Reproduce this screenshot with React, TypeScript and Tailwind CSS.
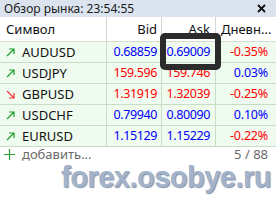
const rows = [
  { sym: 'AUDUSD', up: true, bid: '0.68859', ask: '0.69009', pc: '-0.35%', bc: 'text-[#0000ff]', pcc: 'text-[#ff0000]' },
  { sym: 'USDJPY', up: true, bid: '159.596', ask: '159.746', pc: '0.03%', bc: 'text-[#ff0000]', pcc: 'text-[#0000ff]' },
  { sym: 'GBPUSD', up: false, bid: '1.31919', ask: '1.32039', pc: '-0.25%', bc: 'text-[#ff0000]', pcc: 'text-[#ff0000]' },
  { sym: 'USDCHF', up: true, bid: '0.79940', ask: '0.80090', pc: '0.10%', bc: 'text-[#0000ff]', pcc: 'text-[#0000ff]' },
  { sym: 'EURUSD', up: true, bid: '1.15129', ask: '1.15229', pc: '-0.22%', bc: 'text-[#0000ff]', pcc: 'text-[#ff0000]' },
];

function Arrow({ up }: { up: boolean }) {
  return up ? (
    <svg width="9" height="9" viewBox="0 0 9 9" fill="none" stroke="#1c9e2a" strokeWidth="1.2">
      <path d="M1 8 L8 1 M3 1 H8 V6" />
    </svg>
  ) : (
    <svg width="9" height="9" viewBox="0 0 9 9" fill="none" stroke="#e8343a" strokeWidth="1.2">
      <path d="M1 1 L8 8 M8 3 V8 H3" />
    </svg>
  );
}

export default function App() {
  return (
    <div className="relative w-[276px] h-[203px] bg-white overflow-hidden text-[13px] leading-none" style={{ fontFamily: '"Noto Sans", "Open Sans", sans-serif' }}>
      <div className="h-[17px] bg-[#dbe4ee] flex items-center justify-between pl-[4px] pr-[10px]">
        <span className="text-[12px] text-[#1a1a1a]">Обзор рынка: 23:54:55</span>
        <svg width="9" height="9" viewBox="0 0 9 9" stroke="#111" strokeWidth="1.8">
          <path d="M1 1 L8 8 M8 1 L1 8" />
        </svg>
      </div>

      <div className="grid grid-cols-[107px_55px_54px_60px] h-[25px] border-b border-[#d4dcd4] text-[#111]">
        <div className="border-r border-[#d6d6d6] flex items-center pl-[6px]">Символ</div>
        <div className="border-r border-[#d6d6d6] flex items-center justify-end pr-[4px]">Bid</div>
        <div className="border-r border-[#d6d6d6] flex items-center justify-end pr-[5px]">Ask</div>
        <div className="flex items-center pl-[5px]">Дневн...</div>
      </div>

      {rows.map((r) => (
        <div key={r.sym} className="grid grid-cols-[107px_55px_54px_60px] h-[21px] border-b border-[#c8dcc8] bg-[#f0fbf0]">
          <div className="border-r border-[#c8dcc8] flex items-center pl-[6px] gap-[7px] text-[#111]">
            <Arrow up={r.up} />
            <span>{r.sym}</span>
          </div>
          <div className={`border-r border-[#c8dcc8] flex items-center justify-end pr-[4px] text-[12.5px] tracking-[-0.4px] ${r.bc}`}>{r.bid}</div>
          <div className={`border-r border-[#c8dcc8] flex items-center justify-end pr-[5px] text-[12.5px] tracking-[-0.4px] ${r.bc}`}>{r.ask}</div>
          <div className={`flex items-center justify-end pr-[8px] text-[12.5px] tracking-[-0.2px] ${r.pcc}`}>{r.pc}</div>
        </div>
      ))}

      <div className="h-[14px] flex items-center justify-between pl-[4px] pr-[8px] text-[#6a6a6a]">
        <div className="flex items-center gap-[7px]">
          <svg width="11" height="11" viewBox="0 0 11 11" stroke="#2a9a3a" strokeWidth="1.2">
            <path d="M5.5 0 V11 M0 5.5 H11" />
          </svg>
          <span>добавить...</span>
        </div>
        <span>5 / 88</span>
      </div>

      <div
        className="absolute left-[61px] top-[163px] text-[29px] font-bold tracking-[-0.5px] text-[#a3b4ca] [text-shadow:1px_1px_1px_#7d92ae]"
        style={{ fontFamily: '"Liberation Sans", Arial, sans-serif' }}
      >
        forex.osobye.ru
      </div>

      <div className="absolute left-[160px] top-[33px] w-[61px] h-[37px] border-[6px] border-[#2b2b2b] rounded-[5px]" />
    </div>
  );
}
